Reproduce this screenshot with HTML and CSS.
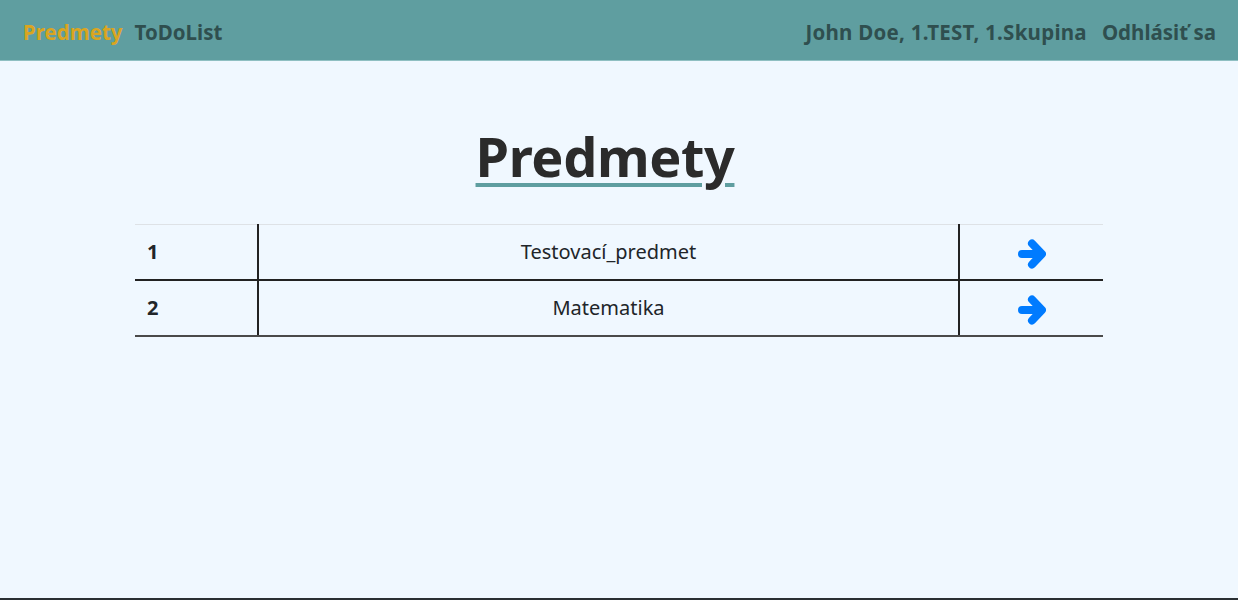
FILE: index.html
```html
<!DOCTYPE html>
<html lang="sk">
<head>
<meta charset="utf-8">
<title>Predmety</title>
<link rel="stylesheet" href="styles.css">
</head>
<body>
<nav class="navbar">
  <div class="nav-left">
    <a class="nav-link active" href="#">Predmety</a>
    <a class="nav-link" href="#">ToDoList</a>
  </div>
  <div class="nav-right">
    <span class="nav-link">John Doe, 1.TEST, 1.Skupina</span>
    <a class="nav-link" href="#">Odhlásiť sa</a>
  </div>
</nav>
<main class="main">
  <h1 class="title">Predmety</h1>
  <table class="subjects">
    <tbody>
      <tr>
        <td class="c-num">1</td>
        <td class="c-name">Testovací_predmet</td>
        <td class="c-go"><a href="#" class="go"><svg viewBox="0 0 28 30" width="28" height="30" aria-hidden="true"><path d="M4 15H23M14 4.5L24 15L14 25.5" fill="none" stroke="#007bff" stroke-width="8" stroke-linecap="round" stroke-linejoin="round"/></svg></a></td>
      </tr>
      <tr>
        <td class="c-num">2</td>
        <td class="c-name">Matematika</td>
        <td class="c-go"><a href="#" class="go"><svg viewBox="0 0 28 30" width="28" height="30" aria-hidden="true"><path d="M4 15H23M14 4.5L24 15L14 25.5" fill="none" stroke="#007bff" stroke-width="8" stroke-linecap="round" stroke-linejoin="round"/></svg></a></td>
      </tr>
    </tbody>
  </table>
</main>
<footer class="footer"></footer>
</body>
</html>
```

FILE: styles.css
```css
html, body {
  margin: 0;
  padding: 0;
}
body {
  background: #f0f8ff;
  font-family: "Noto Sans", "Open Sans", sans-serif;
  color: #212529;
  min-height: 100vh;
  display: flex;
  flex-direction: column;
}
.navbar {
  height: 60px;
  background: #5f9ea0;
  border-bottom: 1px solid #8fbfc2;
  display: flex;
  align-items: center;
  justify-content: space-between;
  padding: 0 22px 0 23px;
}
.nav-left, .nav-right {
  display: flex;
  align-items: center;
  gap: 12px;
}
.nav-right {
  gap: 15px;
}
.nav-link {
  font-size: 20.5px;
  line-height: 30px;
  font-weight: 700;
  color: #2f4f4f;
  text-decoration: none;
  padding-top: 3px;
}
.nav-right .nav-link:first-child {
  letter-spacing: 0.25px;
}
.nav-link.active {
  color: #daa520;
}
.main {
  flex: 1;
  display: flex;
  flex-direction: column;
  align-items: center;
}
.title {
  margin: 62px 28px 35px 0;
  font-size: 54px;
  line-height: 66px;
  font-weight: 700;
  color: #2b2b2b;
  letter-spacing: -0.4px;
  text-decoration: underline;
  text-decoration-color: #5f9ea0;
  text-decoration-thickness: 4px;
  text-underline-offset: 6px;
}
.subjects {
  width: 968px;
  border-collapse: collapse;
  font-size: 20px;
  border-top: 1px solid #dee2e6;
}
.subjects td {
  padding: 12px;
  line-height: 30px;
  border-bottom: 2px solid #222;
}
.subjects tr:last-child td {
  border-bottom-color: #4a4a4a;
}
.c-num {
  width: 98px;
  font-weight: 700;
  border-right: 2px solid #222;
}
.c-name {
  text-align: center;
  border-right: 2px solid #222;
}
.c-go {
  width: 119px;
}
.go {
  display: block;
  width: 28px;
  height: 30px;
  margin: 0 auto;
  position: relative;
  top: 2px;
}
.go svg {
  display: block;
}
.footer {
  height: 2px;
  background: #2a2f33;
}
```
